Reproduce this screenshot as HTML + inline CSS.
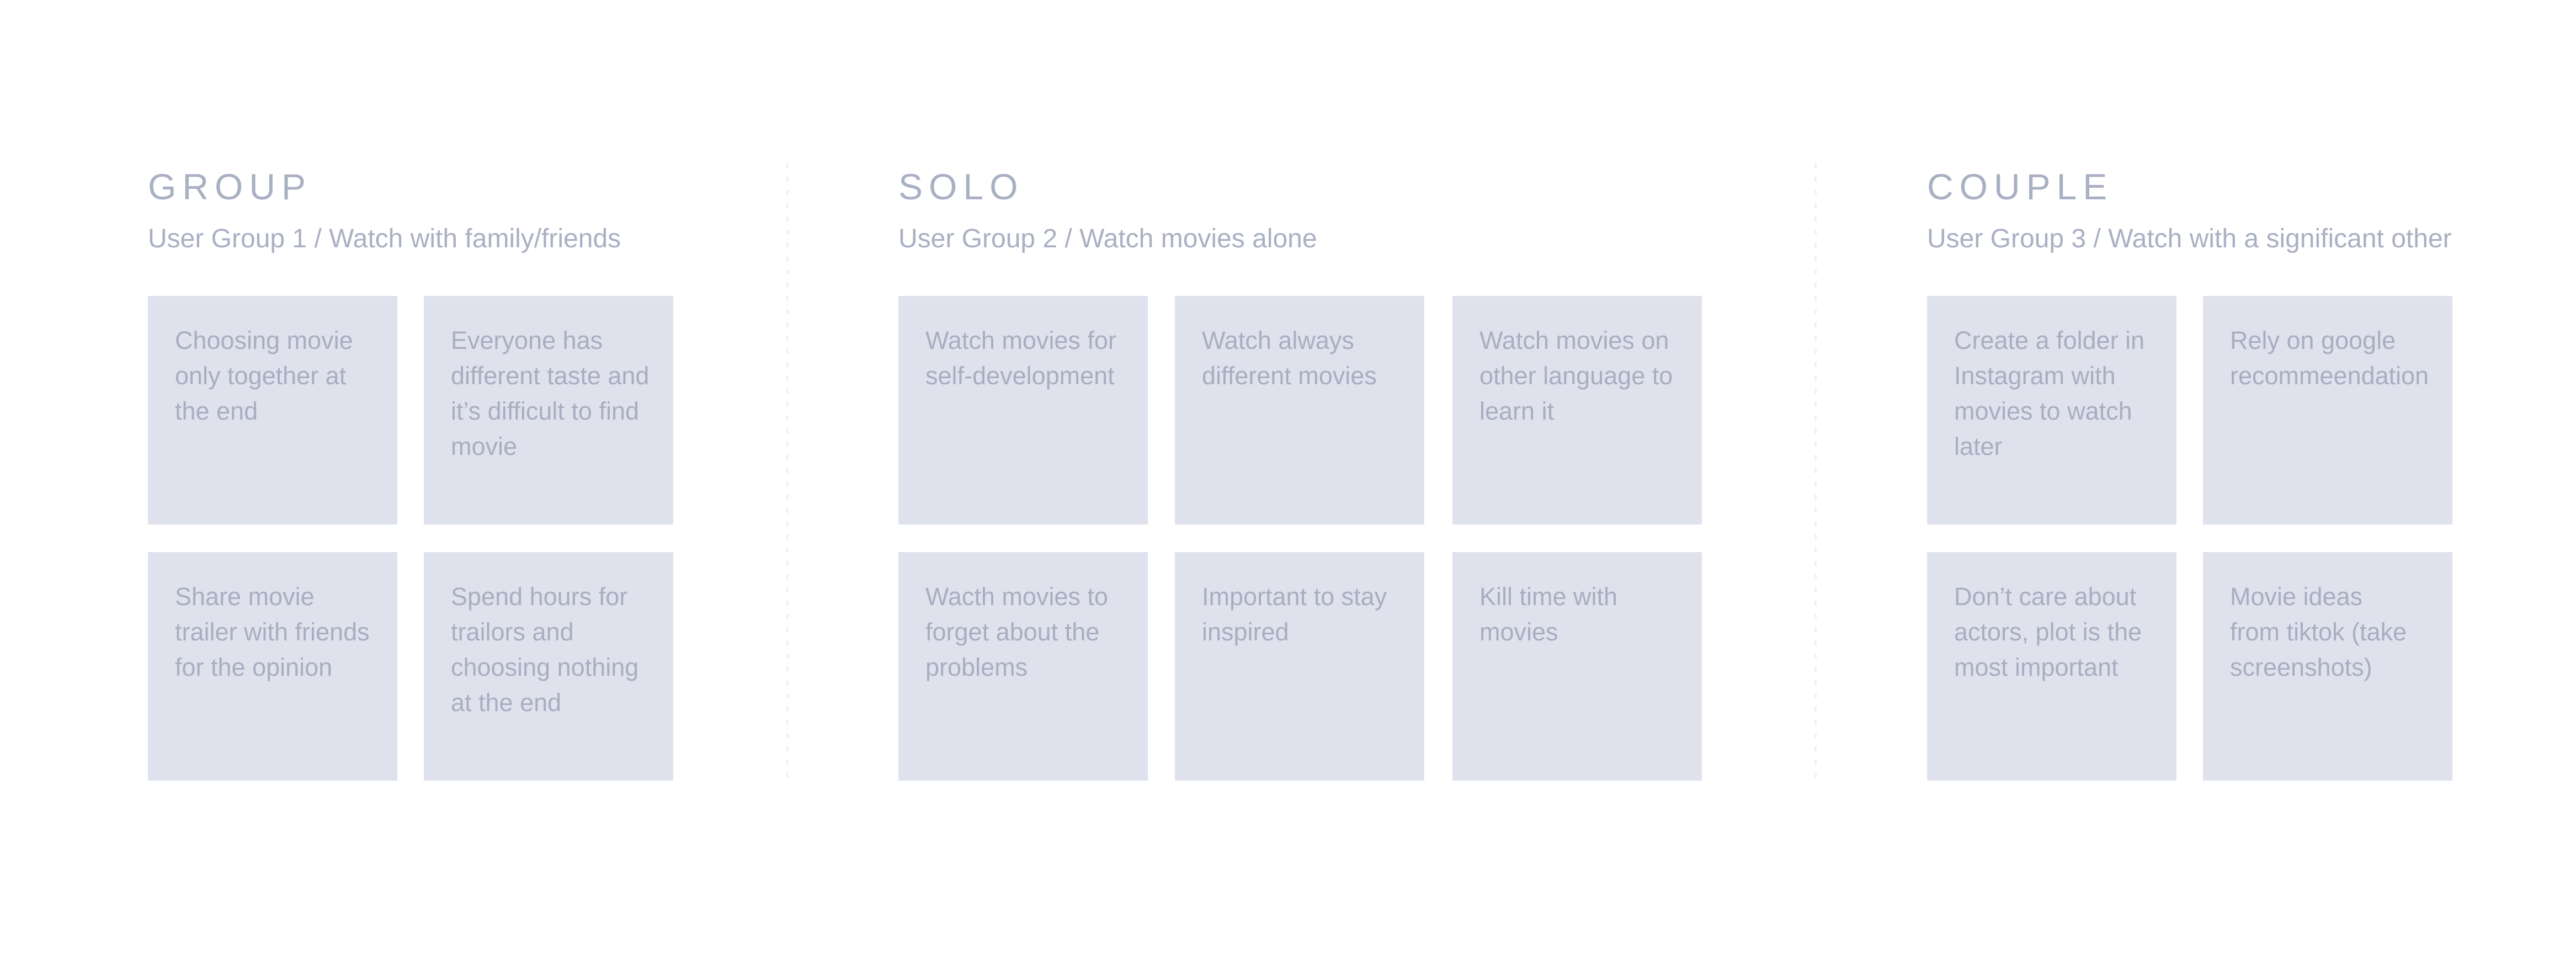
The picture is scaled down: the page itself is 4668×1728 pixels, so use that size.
<!DOCTYPE html>
<html><head><meta charset="utf-8"><style>
html,body{margin:0;padding:0;background:#fff;}
body{width:4668px;height:1728px;position:relative;overflow:hidden;font-family:"Liberation Sans",sans-serif;}
.t{position:absolute;top:305px;font-size:66px;line-height:66px;letter-spacing:11px;color:#aab0c3;white-space:nowrap;}
.s{position:absolute;top:409px;font-size:48px;line-height:48px;color:#aab0c3;white-space:nowrap;letter-spacing:0px;}
.c{position:absolute;width:452px;height:414px;background:#dfe2ed;box-sizing:border-box;padding:49px 0 0 49px;font-size:45px;line-height:64px;color:#a8aec1;white-space:nowrap;letter-spacing:0px;}
.d{position:absolute;top:296px;width:4px;height:1120px;background:repeating-linear-gradient(to bottom,#f0f0f3 0 9px,transparent 9px 24px);}
</style></head><body>
<div class="d" style="left:1425px"></div>
<div class="d" style="left:3288px"></div>

<div class="t" style="left:268px">GROUP</div>
<div class="s" style="left:268px">User Group 1 / Watch with family/friends</div>
<div class="c" style="left:268px;top:536px">Choosing movie<br>only together at<br>the end</div>
<div class="c" style="left:768px;top:536px">Everyone has<br>different taste and<br>it’s difficult to find<br>movie</div>
<div class="c" style="left:268px;top:1000px">Share movie<br>trailer with friends<br>for the opinion</div>
<div class="c" style="left:768px;top:1000px">Spend hours for<br>trailors and<br>choosing nothing<br>at the end</div>

<div class="t" style="left:1628px">SOLO</div>
<div class="s" style="left:1628px">User Group 2 / Watch movies alone</div>
<div class="c" style="left:1628px;top:536px">Watch movies for<br>self-development</div>
<div class="c" style="left:2129px;top:536px">Watch always<br>different movies</div>
<div class="c" style="left:2632px;top:536px">Watch movies on<br>other language to<br>learn it</div>
<div class="c" style="left:1628px;top:1000px">Wacth movies to<br>forget about the<br>problems</div>
<div class="c" style="left:2129px;top:1000px">Important to stay<br>inspired</div>
<div class="c" style="left:2632px;top:1000px">Kill time with<br>movies</div>

<div class="t" style="left:3492px">COUPLE</div>
<div class="s" style="left:3492px">User Group 3 / Watch with a significant other</div>
<div class="c" style="left:3492px;top:536px">Create a folder in<br>Instagram with<br>movies to watch<br>later</div>
<div class="c" style="left:3992px;top:536px">Rely on google<br>recommeendation</div>
<div class="c" style="left:3492px;top:1000px">Don’t care about<br>actors, plot is the<br>most important</div>
<div class="c" style="left:3992px;top:1000px">Movie ideas<br>from tiktok (take<br>screenshots)</div>
</body></html>
